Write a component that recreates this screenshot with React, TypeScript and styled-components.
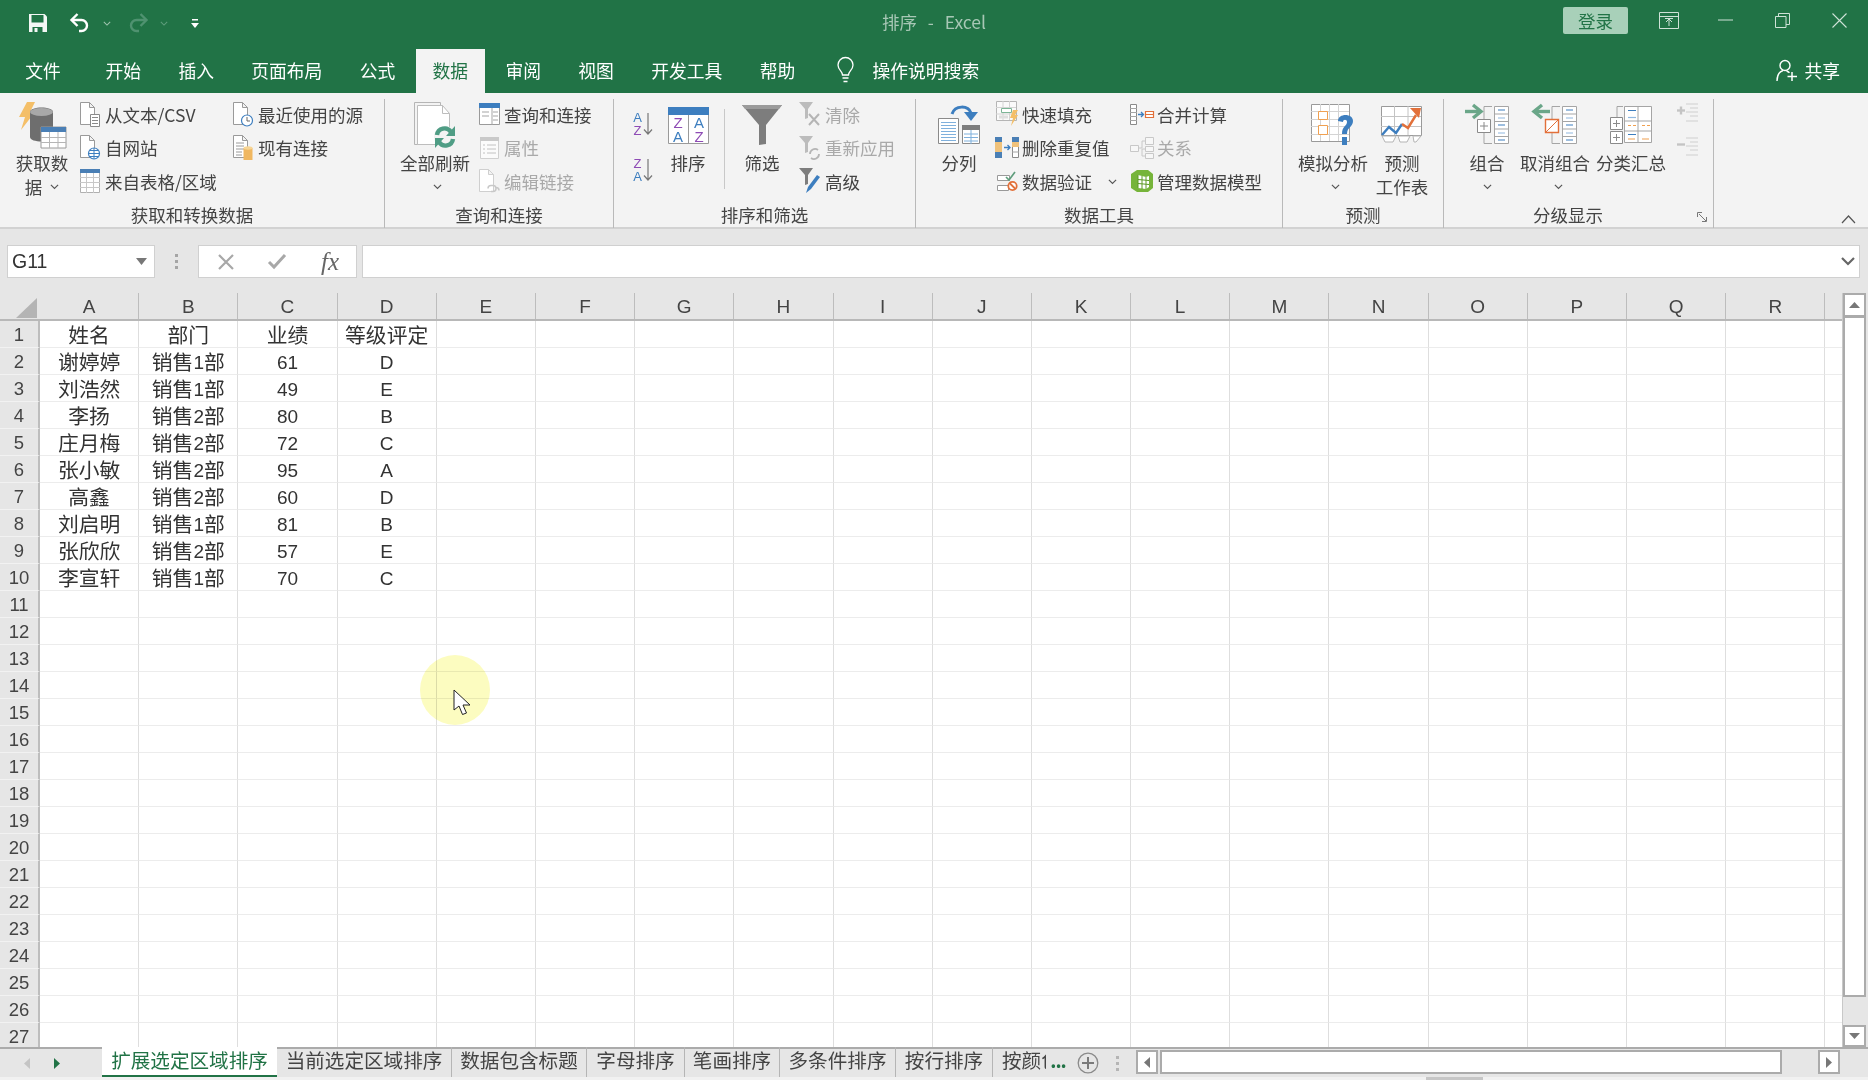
import React from 'react'
import styled, { createGlobalStyle } from 'styled-components'

const GREEN = '#217346'
const CJK = '"Noto Sans CJK SC", "Liberation Sans", sans-serif'

const GlobalStyle = createGlobalStyle`
  html, body { margin: 0; padding: 0; overflow: hidden; background: #fff; }
  * { box-sizing: border-box; }
  svg { display: block; flex: none; overflow: visible; }
`

const App_ = styled.div`
  position: relative;
  width: 1868px;
  height: 1080px;
  overflow: hidden;
  font-family: ${CJK};
  color: #444;
  display: flex;
  flex-direction: column;
`

/* ---------- title bar ---------- */
const TitleBar = styled.div`
  background: ${GREEN};
  height: 93px;
  flex: none;
  display: flex;
  flex-direction: column;
`
const TopRow = styled.div`
  height: 49px;
  display: grid;
  grid-template-columns: 1fr auto 1fr;
  align-items: start;
`
const Qat = styled.div`
  display: flex;
  align-items: center;
  height: 46px;
  padding-left: 18px;
`
const QatItem = styled.div<{ $w: number }>`
  width: ${p => p.$w}px;
  display: flex;
  justify-content: center;
  align-items: center;
`
const QatChevron = styled.div`
  width: 10px;
  margin-right: 5px;
  display: flex;
  justify-content: center;
`
const Title = styled.div`
  font-size: 17.5px;
  line-height: 43px;
  color: #a7c7b5;
  white-space: pre;
  word-spacing: 1.5px;
`
const WinControls = styled.div`
  display: flex;
  justify-content: flex-end;
  align-items: center;
  height: 40px;
`
const LoginButton = styled.div`
  width: 65px;
  height: 27px;
  margin-right: 12px;
  border-radius: 2px;
  background: #a8d0b9;
  color: ${GREEN};
  font-size: 17.5px;
  line-height: 27px;
  text-align: center;
`
const WinButton = styled.div`
  width: 57px;
  display: flex;
  justify-content: center;
`
const TabRow = styled.div`
  height: 44px;
  display: flex;
  align-items: stretch;
  padding-left: 3px;
`
const MenuTab = styled.div<{ $active?: boolean; $first?: boolean }>`
  padding: 0 17px;
  width: ${p => (p.$first ? '80px' : 'auto')};
  margin-right: ${p => (p.$first ? '5.5px' : '3.3px')};
  text-align: center;
  font-size: 17.8px;
  line-height: 43px;
  white-space: nowrap;
  color: ${p => (p.$active ? GREEN : '#fff')};
  background: ${p => (p.$active ? '#f3f3f3' : 'transparent')};
`
const SearchHint = styled.div`
  display: flex;
  align-items: center;
  margin-left: 21px;
  padding-bottom: 2px;
  gap: 19px;
  color: #fff;
  font-size: 17.8px;
`
const ShareBox = styled.div`
  margin-left: auto;
  padding: 0 28px 2px 0;
  display: flex;
  align-items: center;
  gap: 6px;
  color: #fff;
  font-size: 17.8px;
`

/* ---------- ribbon ---------- */
const Ribbon = styled.div`
  height: 136px;
  flex: none;
  background: #f3f3f3;
  border-bottom: 2px solid #d2d2d2;
  display: flex;
  position: relative;
`
const Group = styled.div<{ $w: number }>`
  position: relative;
  width: ${p => p.$w}px;
  flex: none;
  height: 129px;
  margin-top: 6px;
  border-right: 1px solid #b9b9b9;
  display: flex;
  flex-direction: column;
`
const GroupBody = styled.div<{ $pad: number }>`
  height: 104px;
  padding-left: ${p => p.$pad}px;
  display: flex;
  align-items: flex-start;
`
const GroupLabel = styled.div<{ $pr?: number }>`
  text-align: center;
  padding-right: ${p => p.$pr || 0}px;
  font-size: 17.5px;
  line-height: 24px;
  color: #444;
`
const Launcher = styled.div`
  position: absolute;
  right: 5px;
  bottom: 5px;
`
const Big = styled.div<{ $w: number }>`
  width: ${p => p.$w}px;
  flex: none;
  display: flex;
  flex-direction: column;
  align-items: center;
  font-size: 17.5px;
  line-height: 24px;
  white-space: nowrap;
`
const BigIcon = styled.div`
  height: 52px;
  display: flex;
  align-items: center;
  justify-content: center;
`
const BigLine = styled.div<{ $shift?: number }>`
  height: 24px;
  display: flex;
  align-items: center;
  justify-content: center;
  gap: 8px;
  padding-left: ${p => p.$shift || 0}px;
`
const SmallCol = styled.div<{ $w?: number; $ml?: number }>`
  width: ${p => (p.$w ? `${p.$w}px` : 'auto')};
  margin-left: ${p => p.$ml || 0}px;
  margin-top: -1.5px;
  flex: none;
  display: flex;
  flex-direction: column;
`
const SmallRow = styled.div<{ $off?: boolean }>`
  height: 33.5px;
  display: flex;
  align-items: center;
  gap: 3px;
  font-size: 17.5px;
  white-space: nowrap;
  color: ${p => (p.$off ? '#a9a9a9' : '#444')};
`
const SmallIcon = styled.div`
  width: 24px;
  display: flex;
  justify-content: center;
  align-items: center;
`
const RowChevron = styled.span`
  margin-left: 13px;
`
const SortCol = styled.div`
  width: 28px;
  margin-top: 11px;
  flex: none;
  display: flex;
  flex-direction: column;
  align-items: center;
  gap: 18px;
`
const MiniSep = styled.div`
  width: 1px;
  height: 80px;
  margin: 10px 7px 0 6px;
  flex: none;
  background: #c8c8c8;
`
const OutlineCol = styled.div`
  width: 30px;
  margin-top: 4px;
  flex: none;
  display: flex;
  flex-direction: column;
  align-items: center;
  gap: 14px;
`
const CollapseArrow = styled.div`
  position: absolute;
  right: 12px;
  bottom: 3px;
`

/* ---------- formula bar ---------- */
const FormulaBar = styled.div`
  height: 64px;
  flex: none;
  background: #e6e6e6;
  display: flex;
  padding: 16px 8px 15px 7px;
  align-items: stretch;
`
const Field = styled.div`
  background: #fff;
  border: 1px solid #d0d0d0;
  display: flex;
  align-items: center;
`
const NameBox = styled(Field)`
  width: 148px;
  padding: 0 7px 0 4px;
  justify-content: space-between;
  font-family: "Liberation Sans", sans-serif;
  font-size: 19.5px;
  color: #333;
`
const Dots = styled.div`
  width: 43px;
  display: flex;
  justify-content: center;
  align-items: center;
`
const FxBox = styled(Field)`
  width: 159px;
  padding: 0 17px 0 19px;
  justify-content: space-between;
`
const FxMark = styled.span`
  font-family: "Liberation Serif", serif;
  font-style: italic;
  font-size: 25px;
  line-height: 30px;
  color: #666;
`
const FormulaInput = styled(Field)`
  flex: 1;
  margin-left: 5px;
  justify-content: flex-end;
  padding-right: 4px;
`

/* ---------- sheet ---------- */
const SheetWrap = styled.div`
  flex: 1;
  min-height: 0;
  display: flex;
`
const Grid = styled.div`
  flex: 1;
  min-width: 0;
  overflow: hidden;
  background: #fff;
`
const HeadRow = styled.div`
  height: 28px;
  display: flex;
  background: #e6e6e6;
  border-bottom: 2px solid #b8b8b8;
`
const Corner = styled.div`
  width: 40px;
  flex: none;
  display: flex;
  justify-content: flex-end;
  align-items: flex-end;
  padding: 0 3px 1px 0;
`
const ColHead = styled.div`
  flex: 0 0 99.2px;
  border-right: 1px solid #bdbdbd;
  text-align: center;
  font-family: "Liberation Sans", sans-serif;
  font-size: 19px;
  line-height: 28px;
  color: #444;
`
const SheetRow = styled.div`
  height: 27px;
  display: flex;
`
const RowHead = styled.div`
  width: 40px;
  flex: none;
  background: #e6e6e6;
  border-right: 2px solid #bdbdbd;
  border-bottom: 1px solid #f2f2f2;
  text-align: center;
  font-family: "Liberation Sans", sans-serif;
  font-size: 18.5px;
  line-height: 27px;
  color: #444;
`
const Cell = styled.div`
  flex: 0 0 99.2px;
  border-right: 1px solid #dedede;
  border-bottom: 1px solid #ececec;
  text-align: center;
  font-size: 20.8px;
  line-height: 26px;
  white-space: nowrap;
  color: #333;
`
const Latin = styled.span`
  font-family: "Liberation Sans", sans-serif;
  font-size: 19px;
  vertical-align: 1px;
`
const VScroll = styled.div`
  width: 26px;
  flex: none;
  background: #e6e6e6;
  border-left: 1px solid #c8c8c8;
  padding-right: 2px;
  display: flex;
  flex-direction: column;
`
const ScrollBtn = styled.div<{ $h?: number; $w?: number }>`
  width: ${p => (p.$w ? `${p.$w}px` : 'auto')};
  height: ${p => (p.$h ? `${p.$h}px` : 'auto')};
  flex: none;
  background: #fff;
  border: 2px solid #ababab;
  display: flex;
  align-items: center;
  justify-content: center;
`
const VThumb = styled.div`
  height: 680px;
  flex: none;
  background: #fff;
  border: 2px solid #ababab;
  border-top-width: 1px;
`
const Spacer = styled.div`
  flex: 1;
`
const Highlight = styled.div`
  position: absolute;
  left: 420px;
  top: 655px;
  width: 70px;
  height: 70px;
  border-radius: 50%;
  background: #fcfcc0;
  mix-blend-mode: multiply;
`
const CursorMark = styled.div`
  position: absolute;
  left: 453px;
  top: 689px;
`

/* ---------- sheet tabs ---------- */
const TabBar = styled.div`
  height: 30px;
  flex: none;
  background: #e6e6e6;
  border-top: 2px solid #ababab;
  display: flex;
  align-items: stretch;
`
const SheetNav = styled.div`
  width: 102px;
  flex: none;
  display: flex;
  align-items: center;
  padding-left: 24px;
  gap: 24px;
`
const SheetTab = styled.div<{ $w: number; $active?: boolean }>`
  width: ${p => p.$w}px;
  flex: none;
  white-space: nowrap;
  text-align: center;
  font-size: 19.6px;
  line-height: 25px;
  margin-top: -2px;
  height: 30px;
  color: ${p => (p.$active ? GREEN : '#444')};
  background: ${p => (p.$active ? '#fff' : 'transparent')};
  border-bottom: ${p => (p.$active ? `2px solid ${GREEN}` : 'none')};
  border-right: ${p => (p.$active ? 'none' : '1px solid #b5b5b5')};
`
// the last tab runs out of room and is cut, as in Excel
const ClippedTab = styled.div`
  width: 53px;
  margin: -2px 2px 0 0;
  padding-left: 9px;
  height: 30px;
  flex: none;
  overflow: hidden;
  white-space: nowrap;
  font-size: 19.6px;
  line-height: 25px;
  color: #444;
`
const MoreDots = styled.div`
  width: 20px;
  flex: none;
  text-align: center;
  color: ${GREEN};
  font-size: 19px;
  font-weight: 700;
  line-height: 22px;
  letter-spacing: -1px;
`
const AddSheet = styled.div`
  width: 40px;
  flex: none;
  display: flex;
  justify-content: center;
  align-items: center;
`
const TabDots = styled.div`
  width: 18px;
  flex: none;
  display: flex;
  justify-content: center;
  align-items: center;
`
const HScroll = styled.div`
  flex: none;
  width: 704px;
  margin-left: 10px;
  height: 24px;
  margin-top: 1px;
  display: flex;
`
const HThumb = styled.div`
  width: 622px;
  flex: none;
  margin-left: 2px;
  background: #fff;
  border: 2px solid #ababab;
`
const StatusStrip = styled.div`
  height: 3px;
  flex: none;
  background: #f1f1f1;
  padding-left: 1426px;
`
const StatusPiece = styled.div`
  width: 57px;
  height: 3px;
  background: #c6c6c6;
`

/* ---------- icons ---------- */
const Chevron = ({ color = '#555', size = 9 }: { color?: string; size?: number }) => (
  <svg width={size} height={size * 0.6} viewBox="0 0 10 6">
    <path d="M1 1l4 4 4-4" fill="none" stroke={color} strokeWidth="1.3" />
  </svg>
)
const SaveIcon = () => (
  <svg width="18" height="18" viewBox="0 0 18 18">
    <path d="M0 0h15.5L18 2.5V18H0z" fill="#f4f7f5" />
    <path d="M2.5 1h12v7.500h-12z" fill={GREEN} />
    <path d="M3.500 13h10v5h-10z" fill={GREEN} />
    <path d="M5.500 14h3v4h-3z" fill="#f4f7f5" />
  </svg>
)
const UndoIcon = () => (
  <svg width="20" height="20" viewBox="0 0 20 20">
    <path d="M7.500 1L1.500 7l6 6" fill="none" stroke="#fff" strokeWidth="2.400" />
    <path d="M2 7h9.500a5.500 5.500 0 0 1 0 11H9" fill="none" stroke="#fff" strokeWidth="2.400" />
  </svg>
)
const RedoIcon = () => (
  <svg width="20" height="20" viewBox="0 0 20 20">
    <path d="M12.500 1l6 6-6 6" fill="none" stroke="#4f9270" strokeWidth="2.400" />
    <path d="M18 7H8.500a5.500 5.500 0 0 0 0 11H11" fill="none" stroke="#4f9270" strokeWidth="2.400" />
  </svg>
)
const CustomizeIcon = () => (
  <svg width="10" height="11" viewBox="0 0 10 11">
    <path d="M2 1h6v1.500H2z" fill="#fff" />
    <path d="M1 5h8L5 10z" fill="#fff" />
  </svg>
)
const RibbonModeIcon = () => (
  <svg width="20" height="17" viewBox="0 0 20 17">
    <path d="M.5.5h19v16H.5zM.5 4.500h19" fill="none" stroke="#cfe2d7" />
    <path d="M10 14V7M7 10l3-3 3 3M6 6.500h8" fill="none" stroke="#cfe2d7" />
  </svg>
)
const MinIcon = () => (
  <svg width="15" height="2" viewBox="0 0 15 2">
    <path d="M0 1h15" stroke="#cfe2d7" />
  </svg>
)
const RestoreIcon = () => (
  <svg width="15" height="15" viewBox="0 0 15 15">
    <path d="M.5 3.500h10.500v11H.5z M3.500 3.500V.5h11v11h-3.500" fill="none" stroke="#cfe2d7" />
  </svg>
)
const CloseIcon = () => (
  <svg width="15" height="15" viewBox="0 0 15 15">
    <path d="M.5.5l14 14M14.500.5l-14 14" stroke="#cfe2d7" strokeWidth="1.100" />
  </svg>
)
const BulbIcon = () => (
  <svg width="17" height="26" viewBox="0 0 17 26">
    <path d="M5.500 18c0-4-4.500-5-4.500-10a7.500 7.500 0 0 1 15 0c0 5-4.500 6-4.500 10z" fill="none" stroke="#fff" strokeWidth="1.300" />
    <path d="M5.500 21h6M6.500 24.500h4" stroke="#fff" strokeWidth="1.300" />
  </svg>
)
const ShareIcon = () => (
  <svg width="22" height="23" viewBox="0 0 22 23">
    <circle cx="9" cy="6.500" r="5" fill="none" stroke="#fff" strokeWidth="1.400" />
    <path d="M1 22c0-6 3-9.500 6-10.500M10.500 12c1 .3 2 .8 3 1.800" fill="none" stroke="#fff" strokeWidth="1.400" />
    <path d="M16 13v9M11.500 17.500H21" stroke="#fff" strokeWidth="1.500" />
  </svg>
)
const GetDataIcon = () => (
  <svg width="48" height="46" viewBox="0 0 48 46">
    <path d="M9 0h8l-5 10h5L3 28l4-13H1z" fill="#f4bf68" />
    <path d="M12 10c0-6 23-6 23 0v25c0 6-23 6-23 0z" fill="#6e6e6e" />
    <ellipse cx="23.500" cy="10" rx="11.500" ry="4" fill="#a8a8a8" />
    <path d="M23 25h25v21H23z" fill="#fff" stroke="#9a9a9a" />
    <path d="M23 25h25v5H23z" fill="#4a7fb5" />
    <path d="M23 35.500h25M23 40.500h25M31.500 30v16M40 30v16" stroke="#b5b5b5" />
  </svg>
)
const PageShape = ({ off = false }: { off?: boolean }) => (
  <path
    d="M.5 .5h9l5 5v17H.5z M9.500 .5v5h5"
    fill="#fff"
    stroke={off ? '#cfcfcf' : '#9a9a9a'}
  />
)
const TextFileIcon = () => (
  <svg width="20" height="25" viewBox="0 0 20 25">
    <PageShape />
    <path d="M10.500 12.500h9v12h-9z" fill="#fff" stroke="#8a8a8a" />
    <path d="M12 15.500h6M12 18.500h6M12 21.500h6" stroke="#8a8a8a" />
  </svg>
)
const WebFileIcon = () => (
  <svg width="20" height="25" viewBox="0 0 20 25">
    <PageShape />
    <circle cx="14" cy="18.500" r="5.500" fill="#fff" stroke="#3d7ebf" strokeWidth="1.200" />
    <path d="M8.500 18.500h11M14 13v11M10 15.500h8M10 21.500h8" stroke="#3d7ebf" />
  </svg>
)
const TableRangeIcon = () => (
  <svg width="20" height="24" viewBox="0 0 20 24">
    <path d="M.5 .5h19v23H.5z" fill="#fff" stroke="#b0b0b0" />
    <path d="M0 0h20v4H0z" fill="#4a7fb5" />
    <path d="M0 8.500h20M0 13.500h20M0 18.500h20M6.500 4v20M13.500 4v20" stroke="#c8c8c8" />
  </svg>
)
const RecentIcon = () => (
  <svg width="20" height="25" viewBox="0 0 20 25">
    <PageShape />
    <circle cx="14" cy="18.500" r="5.500" fill="#fff" stroke="#3d7ebf" strokeWidth="1.200" />
    <path d="M14 15v4h3" fill="none" stroke="#666" />
  </svg>
)
const ExistIcon = () => (
  <svg width="20" height="25" viewBox="0 0 20 25">
    <PageShape />
    <path d="M3 8h8M3 11h8M3 14h8M3 17h6M3 20h6" stroke="#9a9a9a" />
    <path d="M10.500 13h9v12h-9z" fill="#f0b760" />
    <ellipse cx="15" cy="13" rx="4.500" ry="1.700" fill="#f7d594" />
  </svg>
)
const RefreshAllIcon = () => (
  <svg width="42" height="46" viewBox="0 0 42 46">
    <path d="M.5 .5h26v42H.5z" fill="#f3f3f3" stroke="#b5b5b5" />
    <path d="M3.500 3.500h25l7 8v31h-32z" fill="#fff" stroke="#bdbdbd" />
    <path d="M28.500 3.500v8h7" fill="none" stroke="#bdbdbd" />
    <circle cx="31" cy="35" r="11" fill="#f3f3f3" />
    <path d="M23 33c1-7 10-9 14-3M39 37c-1 7-10 9-14 3" fill="none" stroke="#4f9d85" strokeWidth="4.400" />
    <path d="M41 24v10h-9zM21 46V36h9z" fill="#4f9d85" />
  </svg>
)
const QueryPaneIcon = () => (
  <svg width="21" height="22" viewBox="0 0 21 22">
    <path d="M.5 .5h20v21H.5z" fill="#fff" stroke="#9a9a9a" />
    <path d="M0 0h21v5H0z" fill="#3d7ebf" />
    <path d="M13 5v17M14 9h5M14 13h5M14 17h5M3 9h7M3 13h7" stroke="#a5a5a5" />
  </svg>
)
const PropsIcon = () => (
  <svg width="19" height="22" viewBox="0 0 19 22">
    <path d="M.5 .5h18v21H.5z" fill="#fbfbfb" stroke="#d0d0d0" />
    <path d="M0 0h19v4H0z" fill="#c9c9c9" />
    <path d="M3 8h2M7 8h9M3 12h2M7 12h9M3 16h2M7 16h9" stroke="#c2c2c2" />
  </svg>
)
const EditLinkIcon = () => (
  <svg width="21" height="25" viewBox="0 0 21 25">
    <PageShape off />
    <path d="M9 19.500a3 3 0 0 1 3-3h2a3 3 0 0 1 0 6h-2M20 21.500a3 3 0 0 0-3-3" fill="none" stroke="#c8c8c8" strokeWidth="1.500" />
  </svg>
)
const LetterIcon = ({ first, second }: { first: string; second: string }) => (
  <svg width="22" height="28" viewBox="0 0 22 28">
    <text x="4.500" y="12" textAnchor="middle" fontFamily="Liberation Sans" fontSize="13" fill={first === 'A' ? '#3d7ebf' : '#8e4bb5'}>{first}</text>
    <text x="4.500" y="25" textAnchor="middle" fontFamily="Liberation Sans" fontSize="13" fill={second === 'A' ? '#3d7ebf' : '#8e4bb5'}>{second}</text>
    <path d="M15 3v21M11 19.500l4 4.500 4-4.500" fill="none" stroke="#777" strokeWidth="1.200" />
  </svg>
)
const SortIcon = () => (
  <svg width="41" height="37" viewBox="0 0 41 37">
    <path d="M.5 .5h40v36H.5z" fill="#fff" stroke="#9a9a9a" />
    <path d="M0 0h41v8H0z" fill="#3d7ebf" />
    <path d="M20.500 8v29" stroke="#9a9a9a" />
    <g fontFamily="Liberation Sans" fontSize="15" textAnchor="middle">
      <text x="10" y="21" fill="#8e4bb5">Z</text>
      <text x="31" y="21" fill="#3d7ebf">A</text>
      <text x="10" y="35" fill="#3d7ebf">A</text>
      <text x="31" y="35" fill="#8e4bb5">Z</text>
    </g>
  </svg>
)
const FunnelIcon = () => (
  <svg width="40" height="40" viewBox="0 0 40 40">
    <path d="M0 0h40L24 20v19l-7 1V20z" fill="#7d7d7d" />
    <path d="M0 0h40l-3 4H3z" fill="#9b9b9b" />
  </svg>
)
const SmallFunnel = ({ color }: { color: string }) => (
  <path d="M0 0h14L9 7v9l-3 1V7z" fill={color} />
)
const ClearIcon = () => (
  <svg width="22" height="24" viewBox="0 0 22 24">
    <SmallFunnel color="#bcbcbc" />
    <path d="M10 12l10 11M20 12L10 23" stroke="#b5b5b5" strokeWidth="2" />
  </svg>
)
const ReapplyIcon = () => (
  <svg width="22" height="24" viewBox="0 0 22 24">
    <SmallFunnel color="#bcbcbc" />
    <path d="M11 18a5 5 0 0 1 8-4M20 18a5 5 0 0 1-8 4" fill="none" stroke="#b5b5b5" strokeWidth="1.800" />
  </svg>
)
const AdvancedIcon = () => (
  <svg width="22" height="26" viewBox="0 0 22 26">
    <SmallFunnel color="#7d7d7d" />
    <path d="M7 25l2-6 9-12 3 2-9 12z" fill="#3d7ebf" />
  </svg>
)
const SplitIcon = () => (
  <svg width="42" height="38" viewBox="0 0 42 38">
    <path d="M.5 12.500h20v25H.5z" fill="#fff" stroke="#8a8a8a" />
    <path d="M3 16.500h15M3 19.500h15M3 22.500h15M3 25.500h15M3 28.500h15M3 31.500h15M3 34.500h15" stroke="#7fb0dc" />
    <path d="M24.500 19.500h17v18h-17z" fill="#fff" stroke="#8a8a8a" />
    <path d="M24 19h18v5H24z" fill="#7d7d7d" />
    <path d="M33 24v14M26 28h14M26 31.500h14M26 35h14" stroke="#7fb0dc" />
    <path d="M14 8c3-9 16-9 19-1" fill="none" stroke="#3d7ebf" strokeWidth="3" />
    <path d="M26 6h14l-7 9z" fill="#3d7ebf" />
  </svg>
)
const FlashFillIcon = () => (
  <svg width="22" height="26" viewBox="0 0 22 26">
    <path d="M.5 .5h20v19H.5z" fill="#fafafa" stroke="#b5b5b5" />
    <path d="M0 6.500h20M0 13h20M7 0v19M13.500 0v19" stroke="#d4d4d4" />
    <path d="M5.500 7.500h10v4h-10z" fill="#fff" stroke="#7cb596" />
    <path d="M3 14.500h9v3H3z" fill="#dedede" />
    <path d="M17 9h5l-3 5h3l-7 11 2-8h-3z" fill="#f4bf68" />
  </svg>
)
const DuplicatesIcon = () => (
  <svg width="24" height="21" viewBox="0 0 24 21">
    <path d="M0 0h7v5H0zM0 15h7v6H0z" fill="#4a7fb5" />
    <path d="M0 5h7v10H0z" fill="#f0c27b" />
    <path d="M17.500 .5h6v20h-6z" fill="#fff" stroke="#8a8a8a" />
    <path d="M17 0h7v5h-7z" fill="#4a7fb5" />
    <path d="M17 5h7v5h-7z" fill="#f0c27b" />
    <path d="M17 15h7" stroke="#a5a5a5" />
    <path d="M9 10.500h5.500M12.500 8l2.500 2.500-2.500 2.500" fill="none" stroke="#3d7ebf" strokeWidth="1.300" />
  </svg>
)
const ValidateIcon = () => (
  <svg width="20" height="19" viewBox="0 0 20 19">
    <path d="M.5 3.500h12v5H.5zM.5 13.500h11v5H.5z" fill="#fff" stroke="#999" />
    <path d="M9 5l3 3 6-8" fill="none" stroke="#5f9d7c" strokeWidth="1.700" />
    <circle cx="15.500" cy="14" r="4.200" fill="#fff" stroke="#e2703a" strokeWidth="1.800" />
    <path d="M12.500 11l6 6" stroke="#e2703a" strokeWidth="1.800" />
  </svg>
)
const ConsolidateIcon = () => (
  <svg width="24" height="21" viewBox="0 0 24 21">
    <path d="M.5 .5h6v20h-6z" fill="#fff" stroke="#8a8a8a" />
    <path d="M0 4.500h7M0 8.500h7M0 12.500h7M0 16.500h7" stroke="#a5a5a5" />
    <path d="M8 10.500h5M11 8l2.500 2.500L11 13" fill="none" stroke="#3d7ebf" strokeWidth="1.300" />
    <path d="M15.500 7.500h8v6h-8z" fill="#fff" stroke="#e2703a" strokeWidth="1.200" />
    <path d="M15.500 10.500h8" stroke="#e2703a" />
  </svg>
)
const RelationIcon = () => (
  <svg width="24" height="22" viewBox="0 0 24 22">
    <path d="M.5 8.500h8v6h-8zM15.500 .5h8v7h-8zM15.500 9.500h8v5h-8zM15.500 16.500h8v5h-8z" fill="#f7f7f7" stroke="#c8c8c8" />
    <path d="M8 11h4V4h3M12 12h3M12 12v7h3" fill="none" stroke="#c8c8c8" />
  </svg>
)
const ModelIcon = () => (
  <svg width="22" height="22" viewBox="0 0 22 22">
    <path d="M0 4l6-4h11l5 4v14l-5 4H6l-6-4z" fill="#76b43a" />
    <path d="M7 5l8 2 3-1v11l-3 2-8-1z" fill="#fff" />
    <path d="M7 5v13M15 7v12M11 6v13M7 9.500l11 1M7 13.500l11 1" fill="none" stroke="#5c9a26" />
  </svg>
)
const WhatIfIcon = () => (
  <svg width="44" height="42" viewBox="0 0 44 42">
    <path d="M.5 .5h38v37H.5z" fill="#fff" stroke="#9a9a9a" />
    <path d="M0 7.500h38M0 15.500h38M0 22.500h38M0 30.500h38M9.500 0v37M18.500 0v37M27.500 0v37" stroke="#d4d4d4" />
    <path d="M7.500 7.500h9v8h-9zM7.500 21.500h9v9h-9z" fill="#fff" stroke="#f0a050" />
    <path d="M27 17c0-8 15-8 15 0 0 6-6 6-6 13h-5c0-8 5-8 5-12 0-3-4-3-4 0z" fill="#3d7ebf" />
    <path d="M31 33h5v8h-5z" fill="#3d7ebf" />
  </svg>
)
const ForecastIcon = () => (
  <svg width="42" height="38" viewBox="0 0 42 38">
    <path d="M.5 .5h40v29H.5z" fill="#fff" stroke="#9a9a9a" />
    <path d="M0 10.500h40M0 20.500h40M13.500 0v29M27 0v29" stroke="#c4c4c4" />
    <path d="M1 29l7-8 7 6 6-9" fill="none" stroke="#3d7ebf" strokeWidth="2.400" />
    <path d="M21 18l6 4 8-13" fill="none" stroke="#e2703a" strokeWidth="2.400" />
    <path d="M29 2h11l-2 10z" fill="#e2703a" />
    <path d="M1 30h14l-3 6H4zM17 30h12l-3 6h-7zM32 30h8l-5 6h-2z" fill="#fff" stroke="#b5b5b5" />
  </svg>
)
const StackColumn = ({ x }: { x: number }) => (
  <g>
    <path d={`M${x + .5} 1.500h14v37h-14z`} fill="#fff" stroke="#a5a5a5" />
    <path d={`M${x} 9h15M${x} 16.500h15M${x} 24h15M${x} 31.500h15`} stroke="#a5a5a5" />
    <path d={`M${x + 4} 5h7M${x + 4} 20h7M${x + 4} 35h7`} stroke="#3d7ebf" strokeWidth="1.200" />
    <path d={`M${x + 4} 13h7M${x + 4} 28h7`} stroke="#8fb8e0" strokeWidth="1.200" />
  </g>
)
const GroupIcon = () => (
  <svg width="44" height="40" viewBox="0 0 44 40">
    <path d="M27 1.500h-8v37h8" fill="none" stroke="#a5a5a5" />
    <StackColumn x={29} />
    <path d="M0 6.500h14" stroke="#6aa688" strokeWidth="3.400" />
    <path d="M8 0l8 6.500L8 13" fill="none" stroke="#6aa688" strokeWidth="3.400" />
    <path d="M12.500 14.500h13v13h-13z" fill="#fff" stroke="#8a8a8a" />
    <path d="M15 21h8M19 17v8" stroke="#8a8a8a" />
  </svg>
)
const UngroupIcon = () => (
  <svg width="44" height="40" viewBox="0 0 44 40">
    <path d="M27 1.500h-8v37h8" fill="none" stroke="#a5a5a5" />
    <StackColumn x={29} />
    <path d="M3 6.500h14" stroke="#6aa688" strokeWidth="3.400" />
    <path d="M9 0L1 6.500 9 13" fill="none" stroke="#6aa688" strokeWidth="3.400" />
    <path d="M12.500 14.500h13v13h-13z" fill="#fff" stroke="#e2703a" strokeWidth="1.400" />
    <path d="M13 27l12-12" stroke="#e2703a" />
  </svg>
)
const SubtotalIcon = () => (
  <svg width="42" height="40" viewBox="0 0 42 40">
    <path d="M13 1.500H7v12" fill="none" stroke="#a5a5a5" />
    <path d="M14.500 1.500h27v36h-27z" fill="#fff" stroke="#a5a5a5" />
    <path d="M14 16h28M14 26h28M28 16v22M28 1.500V16" stroke="#a5a5a5" />
    <path d="M18 5.500h8M18 29.500h8" stroke="#3d7ebf" strokeWidth="1.200" />
    <path d="M18 12.500h8" stroke="#8fb8e0" strokeWidth="1.200" />
    <path d="M18 20.500h3M23 20.500h3M32 20.500h3M37 20.500h3M18 34h7M32 34h7" stroke="#f0a050" strokeWidth="1.200" />
    <path d="M.5 12.500h12v12H.5zM.5 26.500h12v12H.5z" fill="#fff" stroke="#8a8a8a" />
    <path d="M3 18.500h7M6.500 15v7M3 32.500h7M6.500 29v7" stroke="#8a8a8a" />
  </svg>
)
const OutlineMiniIcon = ({ plus }: { plus?: boolean }) => (
  <svg width="21" height="20" viewBox="0 0 21 20">
    <path d="M0 7.500h8" stroke="#c4c4c4" strokeWidth="2.400" />
    {plus && <path d="M4 3.500v8" stroke="#c4c4c4" strokeWidth="2.400" />}
    <path d="M9 1h12M13 5h8M9 9h12M13 13h8M9 18h12" stroke="#cfcfcf" />
  </svg>
)
const LauncherIcon = () => (
  <svg width="11" height="11" viewBox="0 0 11 11">
    <path d="M.5 5V.5H5M2 2l7 7M5 9.500h4.500V5" fill="none" stroke="#777" />
  </svg>
)
const CollapseIcon = () => (
  <svg width="15" height="9" viewBox="0 0 15 9">
    <path d="M1 8l6.500-7L14 8" fill="none" stroke="#555" strokeWidth="1.200" />
  </svg>
)
const DropArrow = () => (
  <svg width="11" height="7" viewBox="0 0 11 7">
    <path d="M0 0h11L5.500 7z" fill="#777" />
  </svg>
)
const VDots = ({ color = '#a5a5a5' }: { color?: string }) => (
  <svg width="3" height="15" viewBox="0 0 3 15">
    <path d="M0 0h3v3H0zM0 6h3v3H0zM0 12h3v3H0z" fill={color} />
  </svg>
)
const CancelMark = () => (
  <svg width="16" height="16" viewBox="0 0 16 16">
    <path d="M1 1l14 14M15 1L1 15" stroke="#a8a8a8" strokeWidth="2.200" />
  </svg>
)
const EnterMark = () => (
  <svg width="18" height="15" viewBox="0 0 18 15">
    <path d="M1 8l5 5L17 1" fill="none" stroke="#a8a8a8" strokeWidth="3" />
  </svg>
)
const WideChevron = () => (
  <svg width="14" height="9" viewBox="0 0 14 9">
    <path d="M1 1l6 6 6-6" fill="none" stroke="#666" strokeWidth="2.200" />
  </svg>
)
const CornerMark = () => (
  <svg width="21" height="20" viewBox="0 0 21 20">
    <path d="M21 0v20H0z" fill="#b4b4b4" />
  </svg>
)
const ArrowUp = () => (
  <svg width="11" height="6" viewBox="0 0 11 6"><path d="M5.500 0L11 6H0z" fill="#777" /></svg>
)
const ArrowDown = () => (
  <svg width="11" height="6" viewBox="0 0 11 6"><path d="M0 0h11L5.500 6z" fill="#777" /></svg>
)
const ArrowLeft = ({ color = '#777' }: { color?: string }) => (
  <svg width="6" height="11" viewBox="0 0 6 11"><path d="M6 0v11L0 5.500z" fill={color} /></svg>
)
const ArrowRight = ({ color = '#777' }: { color?: string }) => (
  <svg width="6" height="11" viewBox="0 0 6 11"><path d="M0 0l6 5.500L0 11z" fill={color} /></svg>
)
const AddCircle = () => (
  <svg width="22" height="22" viewBox="0 0 22 22">
    <circle cx="11" cy="11" r="9.800" fill="none" stroke="#8a8a8a" strokeWidth="1.300" />
    <path d="M11 5v12M5 11h12" stroke="#7a7a7a" strokeWidth="2" />
  </svg>
)
const Pointer = () => (
  <svg width="21" height="30" viewBox="0 0 21 30">
    <path d="M1 1v20l5-4 3.500 8.500 4-1.500L10 16h7z" fill="#fff" stroke="#222" strokeWidth="1" />
  </svg>
)

/* ---------- data ---------- */
// the last column is only a sliver at the window edge, so its letter is out of view
const COLS = 'ABCDEFGHIJKLMNOPQR'.split('').concat('')
const ROWS: string[][] = [
  ['姓名', '部门', '业绩', '等级评定'],
  ['谢婷婷', '销售1部', '61', 'D'],
  ['刘浩然', '销售1部', '49', 'E'],
  ['李扬', '销售2部', '80', 'B'],
  ['庄月梅', '销售2部', '72', 'C'],
  ['张小敏', '销售2部', '95', 'A'],
  ['高鑫', '销售2部', '60', 'D'],
  ['刘启明', '销售1部', '81', 'B'],
  ['张欣欣', '销售2部', '57', 'E'],
  ['李宣轩', '销售1部', '70', 'C'],
]
const MENU = ['开始', '插入', '页面布局', '公式', '数据', '审阅', '视图', '开发工具', '帮助']
const SHEETS: [string, number][] = [
  ['当前选定区域排序', 175],
  ['数据包含标题', 135],
  ['字母排序', 98],
  ['笔画排序', 95],
  ['多条件排序', 116],
  ['按行排序', 97],
]

// digits and letters are narrower than the CJK in the sheet font
const cellText = (s: string) =>
  s.split(/([A-Za-z0-9]+)/).map((part, i) =>
    /[A-Za-z0-9]/.test(part) ? <Latin key={i}>{part}</Latin> : part,
  )

export default function App() {
  return (
    <App_>
      <GlobalStyle />

      <TitleBar>
        <TopRow>
          <Qat>
            <QatItem $w={40}><SaveIcon /></QatItem>
            <QatItem $w={44}><UndoIcon /></QatItem>
            <QatChevron><Chevron color="#9fc4ae" size={8} /></QatChevron>
            <QatItem $w={42}><RedoIcon /></QatItem>
            <QatChevron><Chevron color="#5f9d7c" size={8} /></QatChevron>
            <QatItem $w={42}><CustomizeIcon /></QatItem>
          </Qat>
          <Title>排序  -  Excel</Title>
          <WinControls>
            <LoginButton>登录</LoginButton>
            <WinButton><RibbonModeIcon /></WinButton>
            <WinButton><MinIcon /></WinButton>
            <WinButton><RestoreIcon /></WinButton>
            <WinButton><CloseIcon /></WinButton>
          </WinControls>
        </TopRow>
        <TabRow>
          <MenuTab $first>文件</MenuTab>
          {MENU.map(m => (
            <MenuTab key={m} $active={m === '数据'}>{m}</MenuTab>
          ))}
          <SearchHint><BulbIcon />操作说明搜索</SearchHint>
          <ShareBox><ShareIcon />共享</ShareBox>
        </TabRow>
      </TitleBar>

      <Ribbon>
        <Group $w={385}>
          <GroupBody $pad={9}>
            <Big $w={66}>
              <BigIcon><GetDataIcon /></BigIcon>
              <BigLine>获取数</BigLine>
              <BigLine>据<Chevron /></BigLine>
            </Big>
            <SmallCol $w={153} $ml={3}>
              <SmallRow><SmallIcon><TextFileIcon /></SmallIcon>从文本/CSV</SmallRow>
              <SmallRow><SmallIcon><WebFileIcon /></SmallIcon>自网站</SmallRow>
              <SmallRow><SmallIcon><TableRangeIcon /></SmallIcon>来自表格/区域</SmallRow>
            </SmallCol>
            <SmallCol>
              <SmallRow><SmallIcon><RecentIcon /></SmallIcon>最近使用的源</SmallRow>
              <SmallRow><SmallIcon><ExistIcon /></SmallIcon>现有连接</SmallRow>
            </SmallCol>
          </GroupBody>
          <GroupLabel>获取和转换数据</GroupLabel>
        </Group>

        <Group $w={229}>
          <GroupBody $pad={12}>
            <Big $w={76}>
              <BigIcon><RefreshAllIcon /></BigIcon>
              <BigLine>全部刷新</BigLine>
              <BigLine $shift={5}><Chevron /></BigLine>
            </Big>
            <SmallCol $ml={4}>
              <SmallRow><SmallIcon><QueryPaneIcon /></SmallIcon>查询和连接</SmallRow>
              <SmallRow $off><SmallIcon><PropsIcon /></SmallIcon>属性</SmallRow>
              <SmallRow $off><SmallIcon><EditLinkIcon /></SmallIcon>编辑链接</SmallRow>
            </SmallCol>
          </GroupBody>
          <GroupLabel>查询和连接</GroupLabel>
        </Group>

        <Group $w={302}>
          <GroupBody $pad={16}>
            <SortCol>
              <LetterIcon first="A" second="Z" />
              <LetterIcon first="Z" second="A" />
            </SortCol>
            <Big $w={60}>
              <BigIcon><SortIcon /></BigIcon>
              <BigLine>排序</BigLine>
            </Big>
            <MiniSep />
            <Big $w={60}>
              <BigIcon><FunnelIcon /></BigIcon>
              <BigLine>筛选</BigLine>
            </Big>
            <SmallCol $ml={6}>
              <SmallRow $off><SmallIcon><ClearIcon /></SmallIcon>清除</SmallRow>
              <SmallRow $off><SmallIcon><ReapplyIcon /></SmallIcon>重新应用</SmallRow>
              <SmallRow><SmallIcon><AdvancedIcon /></SmallIcon>高级</SmallRow>
            </SmallCol>
          </GroupBody>
          <GroupLabel>排序和筛选</GroupLabel>
        </Group>

        <Group $w={367}>
          <GroupBody $pad={15}>
            <Big $w={56}>
              <BigIcon><SplitIcon /></BigIcon>
              <BigLine>分列</BigLine>
            </Big>
            <SmallCol $w={135} $ml={8}>
              <SmallRow><SmallIcon><FlashFillIcon /></SmallIcon>快速填充</SmallRow>
              <SmallRow><SmallIcon><DuplicatesIcon /></SmallIcon>删除重复值</SmallRow>
              <SmallRow>
                <SmallIcon><ValidateIcon /></SmallIcon>数据验证
                <RowChevron><Chevron /></RowChevron>
              </SmallRow>
            </SmallCol>
            <SmallCol>
              <SmallRow><SmallIcon><ConsolidateIcon /></SmallIcon>合并计算</SmallRow>
              <SmallRow $off><SmallIcon><RelationIcon /></SmallIcon>关系</SmallRow>
              <SmallRow><SmallIcon><ModelIcon /></SmallIcon>管理数据模型</SmallRow>
            </SmallCol>
          </GroupBody>
          <GroupLabel>数据工具</GroupLabel>
        </Group>

        <Group $w={161}>
          <GroupBody $pad={12}>
            <Big $w={76}>
              <BigIcon><WhatIfIcon /></BigIcon>
              <BigLine>模拟分析</BigLine>
              <BigLine $shift={5}><Chevron /></BigLine>
            </Big>
            <Big $w={62}>
              <BigIcon><ForecastIcon /></BigIcon>
              <BigLine>预测</BigLine>
              <BigLine>工作表</BigLine>
            </Big>
          </GroupBody>
          <GroupLabel>预测</GroupLabel>
        </Group>

        <Group $w={270}>
          <GroupBody $pad={10}>
            <Big $w={66}>
              <BigIcon><GroupIcon /></BigIcon>
              <BigLine>组合</BigLine>
              <BigLine><Chevron /></BigLine>
            </Big>
            <Big $w={70}>
              <BigIcon><UngroupIcon /></BigIcon>
              <BigLine>取消组合</BigLine>
              <BigLine $shift={6}><Chevron /></BigLine>
            </Big>
            <Big $w={82}>
              <BigIcon><SubtotalIcon /></BigIcon>
              <BigLine>分类汇总</BigLine>
            </Big>
            <OutlineCol>
              <OutlineMiniIcon plus />
              <OutlineMiniIcon />
            </OutlineCol>
          </GroupBody>
          <GroupLabel $pr={21}>分级显示</GroupLabel>
          <Launcher><LauncherIcon /></Launcher>
        </Group>

        <CollapseArrow><CollapseIcon /></CollapseArrow>
      </Ribbon>

      <FormulaBar>
        <NameBox>G11<DropArrow /></NameBox>
        <Dots><VDots /></Dots>
        <FxBox><CancelMark /><EnterMark /><FxMark>fx</FxMark></FxBox>
        <FormulaInput><WideChevron /></FormulaInput>
      </FormulaBar>

      <SheetWrap>
        <Grid>
          <HeadRow>
            <Corner><CornerMark /></Corner>
            {COLS.map((c, i) => <ColHead key={i}>{c}</ColHead>)}
          </HeadRow>
          {Array.from({ length: 27 }, (_, r) => (
            <SheetRow key={r}>
              <RowHead>{r + 1}</RowHead>
              {COLS.map((c, i) => (
                <Cell key={i}>{ROWS[r] && ROWS[r][i] ? cellText(ROWS[r][i]) : null}</Cell>
              ))}
            </SheetRow>
          ))}
        </Grid>
        <VScroll>
          <ScrollBtn $h={24}><ArrowUp /></ScrollBtn>
          <VThumb />
          <Spacer />
          <ScrollBtn $h={22}><ArrowDown /></ScrollBtn>
        </VScroll>
      </SheetWrap>

      <TabBar>
        <SheetNav>
          <ArrowLeft color="#c4c4c4" />
          <ArrowRight color={GREEN} />
        </SheetNav>
        <SheetTab $w={175} $active>扩展选定区域排序</SheetTab>
        {SHEETS.map(([name, w]) => (
          <SheetTab key={name} $w={w}>{name}</SheetTab>
        ))}
        <ClippedTab>按颜色排序</ClippedTab>
        <MoreDots>...</MoreDots>
        <AddSheet><AddCircle /></AddSheet>
        <TabDots><VDots color="#b5b5b5" /></TabDots>
        <HScroll>
          <ScrollBtn $w={22}><ArrowLeft /></ScrollBtn>
          <HThumb />
          <Spacer />
          <ScrollBtn $w={22}><ArrowRight /></ScrollBtn>
        </HScroll>
      </TabBar>
      <StatusStrip><StatusPiece /></StatusStrip>

      <Highlight />
      <CursorMark><Pointer /></CursorMark>
    </App_>
  )
}
